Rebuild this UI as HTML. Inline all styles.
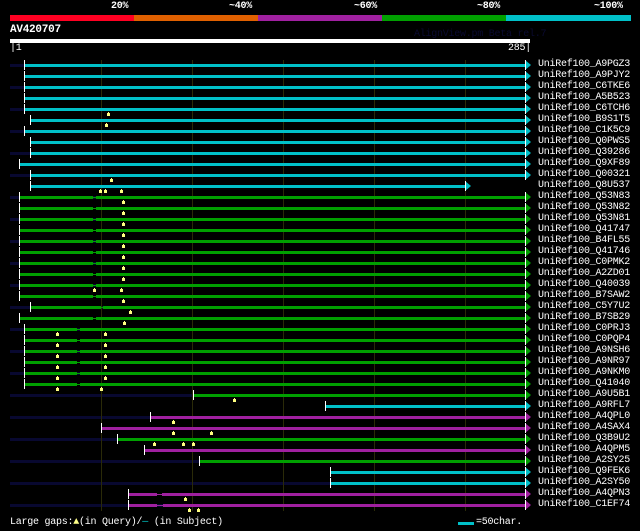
<!DOCTYPE html>
<html><head><meta charset="utf-8"><style>
body{margin:0;background:#000;width:640px;height:531px;overflow:hidden;position:relative;font-family:"Liberation Mono",monospace;}
div{position:absolute;}
.t{color:#fff;font-size:10px;line-height:11px;white-space:pre;letter-spacing:-0.25px;}
.b{font-weight:bold;}
</style></head><body>
<div class="t b" style="left:111px;top:1px;">20%</div>
<div class="t b" style="left:229px;top:1px;">~40%</div>
<div class="t b" style="left:354px;top:1px;">~60%</div>
<div class="t b" style="left:477px;top:1px;">~80%</div>
<div class="t b" style="left:594px;top:1px;">~100%</div>
<div style="left:10px;top:15px;width:124px;height:6px;background:#ff0022"></div>
<div style="left:134px;top:15px;width:124px;height:6px;background:#e06000"></div>
<div style="left:258px;top:15px;width:124px;height:6px;background:#a020a0"></div>
<div style="left:382px;top:15px;width:124px;height:6px;background:#00a000"></div>
<div style="left:506px;top:15px;width:125px;height:6px;background:#00c0c8"></div>
<div class="t b" style="left:10px;top:25px;font-size:11px;">AV420707</div>
<div class="t" style="left:414px;top:29px;color:#0a0a30;">AlignView.pm Beta rel.7</div>
<div style="left:10px;top:39px;width:520px;height:4px;background:#fff"></div>
<div class="t" style="left:10px;top:43px;">|1</div>
<div class="t" style="left:508px;top:43px;">285|</div>
<div id="g"></div>
<div class="t" style="left:10px;top:517px;">Large gaps:<span style="color:#ff8">▲</span>(in Query)/<span style="color:#0cc">—</span> (in Subject)</div>
<div style="left:458px;top:522px;width:16px;height:3px;background:#00c0c8"></div>
<div class="t" style="left:476px;top:517px;">=50char.</div>
<script>
var C={c:'#00c0c8',g:'#00a000',p:'#a020a0'};
var R=[
['A9PGZ3','c',24,525,[]],['A9PJY2','c',24,525,[]],['C6TKE6','c',24,525,[]],['A5B523','c',24,525,[]],['C6TCH6','c',24,525,[108]],
['B9S1T5','c',30,525,[106]],['C1K5C9','c',24,525,[]],['Q0PWS5','c',30,525,[]],['Q39286','c',30,525,[]],['Q9XF89','c',19,525,[]],
['Q00321','c',30,525,[111]],['Q8U537','c',30,465,[100,105,121]],
['Q53N83','g',19,525,[123]],['Q53N82','g',19,525,[123]],['Q53N81','g',19,525,[123]],['Q41747','g',19,525,[123]],['B4FL55','g',19,525,[123]],
['Q41746','g',19,525,[123]],['C0PMK2','g',19,525,[123]],['A2ZD01','g',19,525,[123]],['Q40039','g',19,525,[94,121]],['B7SAW2','g',19,525,[123]],
['C5Y7U2','g',30,525,[130],[101,103]],['B7SB29','g',19,525,[124]],
['C0PRJ3','g',24,525,[57,105]],['C0PQP4','g',24,525,[57,105]],['A9NSH6','g',24,525,[57,105]],['A9NR97','g',24,525,[57,105]],['A9NKM0','g',24,525,[57,105]],['Q41040','g',24,525,[57,101]],
['A9U5B1','g',193,525,[234]],['A9RFL7','c',325,525,[]],['A4QPL0','p',150,525,[173]],['A4SAX4','p',101,525,[173,211]],
['Q3B9U2','g',117,525,[154,183,193]],['A4QPM5','p',144,525,[]],['A2SY25','g',199,525,[]],['Q9FEK6','c',330,525,[]],['A2SY50','c',330,525,[]],
['A4QPN3','p',128,525,[185],[157,162]],['C1EF74','p',128,525,[189,198],[157,163]]];
var h='';
for(var i=0;i<41;i++){var r=R[i],y=64+11*i;
if(i%2==0)h+='<div style="left:10px;top:'+y+'px;width:520px;height:3px;background:#080830"></div>';
for(var x=101;x<530;x+=91)h+='<div style="left:'+x+'px;top:'+(y-4)+'px;width:1px;height:11px;background:#2a2a08"></div>';
}
for(var i=0;i<41;i++){var r=R[i],y=64+11*i,c=C[r[1]];
var gap=r[5];
if(!gap&&r[1]=='g'&&r[2]==19)gap=[93,96];
if(!gap&&r[1]=='g'&&r[2]==24)gap=[77,80];
if(gap){var gs=gap[0],ge=gap[1];
h+='<div style="left:'+r[2]+'px;top:'+y+'px;width:'+(gs-r[2])+'px;height:3px;background:'+c+'"></div>';
h+='<div style="left:'+gs+'px;top:'+(y+1)+'px;width:'+(ge-gs)+'px;height:1px;background:'+c+'"></div>';
h+='<div style="left:'+ge+'px;top:'+y+'px;width:'+(r[3]-ge)+'px;height:3px;background:'+c+'"></div>';
}else h+='<div style="left:'+r[2]+'px;top:'+y+'px;width:'+(r[3]-r[2])+'px;height:3px;background:'+c+'"></div>';
h+='<div style="left:'+r[2]+'px;top:'+(y-4)+'px;width:1px;height:10px;background:#fff"></div>';
h+='<div style="left:'+r[3]+'px;top:'+(y-4)+'px;width:0;height:0;border-top:5px solid transparent;border-bottom:5px solid transparent;border-left:6px solid '+c+'"></div>';
h+='<div style="left:'+r[3]+'px;top:'+(y-4)+'px;width:1px;height:10px;background:#fff"></div>';
for(var j=0;j<r[4].length;j++){var mx=r[4][j];
h+='<div style="left:'+mx+'px;top:'+(y+4)+'px;width:1px;height:1px;background:#ffff80"></div>';
h+='<div style="left:'+(mx-1)+'px;top:'+(y+5)+'px;width:3px;height:3px;background:#ffff80"></div>';}
h+='<div class="t" style="left:538px;top:'+(y-5)+'px;">UniRef100_'+r[0]+'</div>';
}
document.getElementById('g').innerHTML=h;
</script>
</body></html>
